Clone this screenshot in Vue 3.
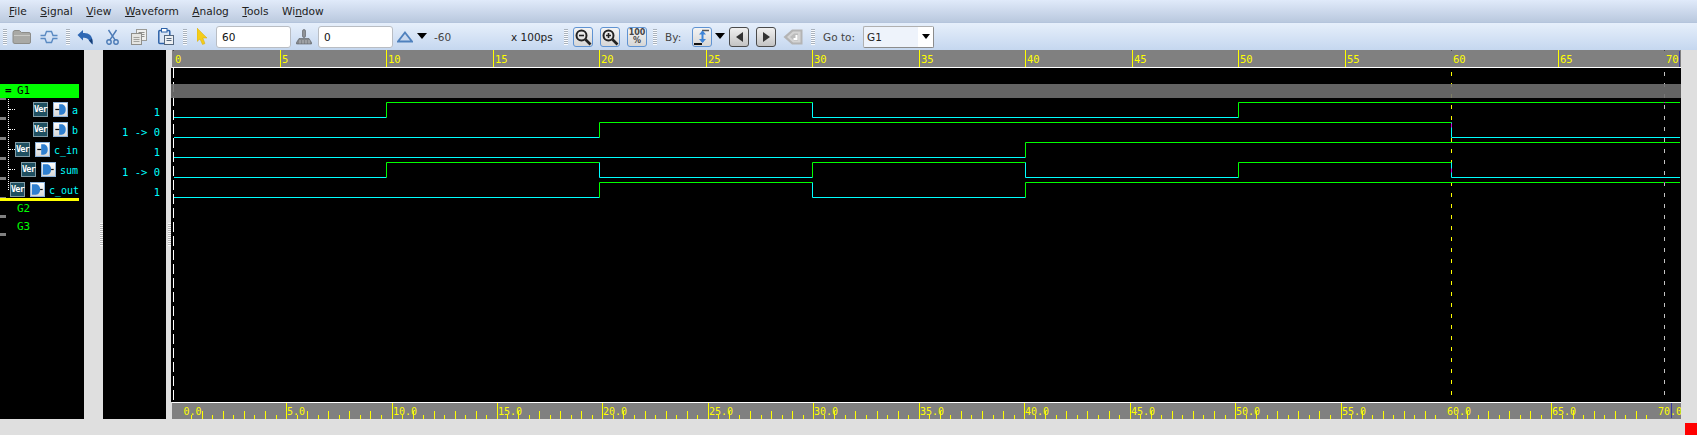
<template>
  <div class="app">
    <div class="menubar">
      <div class="menu-items">
        <span><u>F</u>ile</span>
        <span><u>S</u>ignal</span>
        <span><u>V</u>iew</span>
        <span><u>W</u>aveform</span>
        <span><u>A</u>nalog</span>
        <span><u>T</u>ools</span>
        <span>Wi<u>n</u>dow</span>
      </div>
    </div>

    <div class="toolbar">
      <i class="grip"></i>
      <svg class="ic folder" viewBox="0 0 20 16"><path d="M1 3.5Q1 1.5 3 1.5H7.5L9.5 3.5H17Q18.5 3.5 18.5 5V13Q18.5 14.5 17 14.5H3Q1 14.5 1 13Z" fill="#a9a9a5" stroke="#8d8d89" /><path d="M2 6.5H18" stroke="#c9c9c5" /></svg>
      <svg class="ic pulse" viewBox="0 0 18 16" fill="none" stroke="#5a8ac2" stroke-width="1.4"><path d="M0.5 6.5H5L6.5 2.5H11.5L13 6.5H17.5" /><path d="M0.5 9.5H5L6.5 13.5H11.5L13 9.5H17.5" /></svg>
      <i class="grip g-a"></i>
      <svg class="ic undo" viewBox="0 0 16 16"><path d="M0.5 6L6 1V4C11.5 3.5 15.5 6.5 15.5 12V15.5L12 11.5C11 9.5 9 8.5 6 8.8V11.5Z" fill="#2f68b4" /><path d="M15.5 12V15.5L12 11.5C13 11 14 10.5 15 9.5Z" fill="#173f78" /></svg>
      <svg class="ic scissors" viewBox="0 0 13 16" fill="none" stroke="#4b7ab6" stroke-width="1.4"><path d="M2.5 1L9.2 11.2M10.5 1L3.8 11.2" /><circle cx="3" cy="13" r="2.2" /><circle cx="10" cy="13" r="2.2" /></svg>
      <svg class="ic copy" viewBox="0 0 16 16"><rect x="5.5" y="0.5" width="10" height="11" fill="#f0f0ee" stroke="#9b9b97" /><path d="M7.5 3.5H13.5M7.5 5.5H13.5M7.5 7.5H13.5" stroke="#8f8f8b" /><rect x="0.5" y="4.5" width="10" height="11" fill="#e5e5e2" stroke="#8f8f8b" /><path d="M2.5 8.5H8.5M2.5 10.5H8.5M2.5 12.5H8.5" stroke="#a2a29e" /></svg>
      <svg class="ic paste" viewBox="0 0 16 17"><rect x="0.8" y="2.5" width="11" height="13" rx="1" fill="#dbe6f5" stroke="#2d62a8" stroke-width="1.5" /><rect x="3.5" y="0.5" width="5.5" height="3.5" fill="#fff" stroke="#2d62a8" /><rect x="6.5" y="7.5" width="9" height="9" fill="#eef0f2" stroke="#55687f" /><path d="M8.5 10.5H13.5M8.5 12.5H13.5" stroke="#55687f" /></svg>
      <i class="grip g-b"></i>
      <svg class="ic pointer" viewBox="0 0 10 17"><path d="M0 0V13.5L3 11L5.5 16.5L8 15.5L5.8 10H10Z" fill="#f4cd1a" stroke="#d6a90c" stroke-width="0.5" /></svg>
      <div class="field f-a">60</div>
      <svg class="ic hand" viewBox="0 0 16 16"><rect x="6.5" y="0.5" width="3" height="8" rx="1.5" fill="#8f9296" stroke="#55585c" stroke-width="0.6" /><path d="M3 9.5H13L15.5 13.5V15H0.5V13.5Z" fill="#85888c" stroke="#5c5f63" stroke-width="0.6" /><path d="M4 11V14.5M7 11V14.5M10 11V14.5M13 11V14.5" stroke="#b6b8bb" /></svg>
      <div class="field f-b">0</div>
      <svg class="ic delta" viewBox="0 0 16 12" fill="#c9d8ee" stroke="#4f81bd" stroke-width="1.8"><path d="M8 1.5L15 10.5H1Z" /></svg>
      <svg class="ic drop d-a" viewBox="0 0 10 6"><path d="M0 0H10L5 6Z" fill="#000" /></svg>
      <span class="label delta-val">-60</span>
      <span class="label scale-val">x 100ps</span>
      <i class="grip g-c"></i>
      <div class="tbtn z-a">
        <svg viewBox="0 0 18 18" fill="none" stroke="#222" stroke-width="2"><circle cx="7.5" cy="7.5" r="5" /><path d="M11.5 11.5L16.5 16.5" stroke-width="2.6" /><path d="M5 7.5H10" stroke-width="1.6" /></svg>
      </div>
      <div class="tbtn z-b">
        <svg viewBox="0 0 18 18" fill="none" stroke="#222" stroke-width="2"><circle cx="7.5" cy="7.5" r="5" /><path d="M11.5 11.5L16.5 16.5" stroke-width="2.6" /><path d="M5 7.5H10M7.5 5V10" stroke-width="1.6" /></svg>
      </div>
      <div class="tbtn z-b pct">100<br />%</div>
      <i class="grip g-d"></i>
      <span class="label by">By:</span>
      <div class="tbtn by-btn">
        <svg viewBox="0 0 18 18" fill="none"><path d="M9 2.5H16" stroke="#555" stroke-width="1.5" /><path d="M1 16H9" stroke="#111" stroke-width="2" /><path d="M9.5 3.5V14" stroke="#3d84d8" stroke-width="2" /><path d="M6 6.5L9.5 2.5L13 6.5ZM6 11L9.5 15L13 11Z" fill="#3d84d8" /></svg>
      </div>
      <svg class="ic drop d-b" viewBox="0 0 10 6"><path d="M0 0H10L5 6Z" fill="#000" /></svg>
      <div class="tbtn nav n-a">
        <svg viewBox="0 0 18 18"><path d="M13 4V14L6 9Z" fill="#333" /></svg>
      </div>
      <div class="tbtn nav z-b">
        <svg viewBox="0 0 18 18"><path d="M6 4V14L13 9Z" fill="#333" /></svg>
      </div>
      <svg class="ic back" viewBox="0 0 20 20"><path d="M0.5 10L9 2.5H19.5V17.5H9Z" fill="#b4b4b4" /><path d="M4 10L10 4.5H17.5V15.5H10Z" fill="#d4d4d4" /><path d="M7 10L11 6.5H15V13.5H11Z" fill="#bcbcbc" /><path d="M10.5 12H13.5V8" fill="none" stroke="#fff" stroke-width="2" /></svg>
      <i class="grip g-e"></i>
      <span class="label goto">Go to:</span>
      <div class="combo">
        <span class="combo-text">G1</span>
        <span class="combo-arrow"><svg viewBox="0 0 10 6"><path d="M0 0H10L5 6Z" fill="#000" /></svg></span>
      </div>
    </div>

    <div class="main">
      <div class="names">
        <i v-for="y in nameMarks" :key="y" class="mark" :style="{ top: y + 'px' }"></i>
        <i class="tree-v"></i>
        <i v-for="y in treeRows" :key="'t' + y" class="tree-h" :style="{ top: y + 'px' }"></i>
        <div class="group-head"><b>=</b><span>G1</span></div>
        <div class="sig-rows">
          <div v-for="s in signals" :key="s.name" class="sig-row" :style="{ paddingLeft: s.indent + 'px' }">
            <span class="ver">Ver</span>
            <span class="port" :class="s.out ? 'port-out' : 'port-in'">
              <svg viewBox="0 0 15 15">
                <path v-if="s.out" d="M1 1.5H5.5C9 1.5 10.5 4.5 10.5 7.5S9 13.5 5.5 13.5H1Z" fill="#2f7fd0" />
                <path v-if="s.out" d="M10.5 7.5H13.5" stroke="#111" stroke-width="1.4" />
                <path v-if="!s.out" d="M6 1.5H8.5C12 1.5 13.5 4.5 13.5 7.5S12 13.5 8.5 13.5H6Z" fill="#2f7fd0" />
                <path v-if="!s.out" d="M1.5 7.5H6" stroke="#111" stroke-width="1.4" />
              </svg>
            </span>
            <span class="sig-name">{{ s.name }}</span>
          </div>
        </div>
        <div class="insert-line"></div>
        <div class="group first">G2</div>
        <div class="group">G3</div>
      </div>

      <div class="sash wide"><i></i></div>

      <div class="values">
        <div v-for="s in signals" :key="s.name" class="value">{{ s.value }}</div>
      </div>

      <div class="sash"><i></i></div>

      <div class="wave-col">
        <svg class="ruler-top" viewBox="172 50 1509 17">
          <rect x="172" y="50" width="1509" height="17" fill="#808080" />
          <template v-for="t in topTicks" :key="t">
            <path v-if="t !== 0 && t !== 60 && t !== 70" :d="`M${tx(t)} 50V67`" stroke="#ffff00" />
            <path v-else :d="`M${tx(t)} 50V51`" stroke="#444" />
            <text :x="tx(t) + 1.5" y="63" class="rtext">{{ t }}</text>
          </template>
          <path d="M1679.5 51V67" stroke="#3a3a9e" />
        </svg>
        <svg class="waves" viewBox="171 68 1510 334">
          <rect x="171" y="68" width="1510" height="334" fill="#000" />
          <path d="M173.5 68V402" stroke="#fff" stroke-dasharray="10 4" />
          <path d="M1451.5 72V402" stroke="#ffff00" stroke-dasharray="4 7" />
          <path d="M1664.5 72V402" stroke="#c4c4c4" stroke-dasharray="4 7" />
          <rect x="171" y="84" width="1510" height="14" fill="#6f6f6f" fill-opacity="0.9" />
          <g fill="none">
            <path v-for="(p, i) in wavePaths" :key="i" :d="p.d" :stroke="p.color" />
          </g>
          <path d="M1451.5 123.5V127.5M1451.5 168.5V172.5" stroke="#d000d0" />
          <path d="M1664.5 102V103M1664.5 182V183" stroke="#d000d0" />
        </svg>
        <svg class="ruler-bottom" viewBox="172 402 1509 17">
          <rect x="172" y="402" width="1509" height="1" fill="#fff" />
          <rect x="172" y="403" width="1509" height="16" fill="#808080" />
          <path v-for="k in minorTicks" :key="k.x" :d="`M${k.x} ${k.top}V419`" stroke="#ffff00" />
          <template v-for="m in bottomLabels" :key="m.t">
            <path v-if="m.tick" :d="`M${m.x} 403V419`" stroke="#ffff00" />
            <text :x="m.tx" y="415" class="rtext small">{{ m.t }}.0</text>
          </template>
          <path d="M1671.5 403V418" stroke="#3a3a9e" />
        </svg>
      </div>
    </div>

    <div class="status"><i class="led"></i></div>
  </div>
</template>

<script setup>
const signals = [
  { name: 'a', value: '1', indent: 33, out: false },
  { name: 'b', value: '1 -> 0', indent: 33, out: false },
  { name: 'c_in', value: '1', indent: 15, out: false },
  { name: 'sum', value: '1 -> 0', indent: 21, out: true },
  { name: 'c_out', value: '1', indent: 10, out: true }
]

const nameMarks = [47, 67, 87, 107, 127, 147, 165, 183]
const treeRows = [59, 79, 99, 119]

// time -> px on the top ruler and on the waves
const tx = (t) => Math.floor(173.5 + 21.3 * t) + 0.5

const topTicks = []
for (let t = 0; t <= 70; t += 5) topTicks.push(t)

// [time of each toggle], every signal starts low at row base
const traces = [
  [10, 30, 50],
  [20, 60],
  [40],
  [10, 20, 30, 40, 50, 60],
  [20, 30, 40]
]
const END_X = 1680
const LOW = '#00ffff'
const HIGH = '#00ff00'

const wavePaths = []
traces.forEach((toggles, row) => {
  const hi = 102.5 + row * 20
  const lo = hi + 15
  let x = 174
  let high = false
  toggles.forEach((t) => {
    const nx = tx(t)
    wavePaths.push({ d: `M${x} ${high ? hi : lo}H${nx}`, color: high ? HIGH : LOW })
    high = !high
    wavePaths.push({ d: `M${nx} ${hi}V${lo}`, color: high ? HIGH : LOW })
    x = nx
  })
  wavePaths.push({ d: `M${x} ${high ? hi : lo}H${END_X}`, color: high ? HIGH : LOW })
})

const B0 = 180.6
const BSTEP = 10.545
const minorTicks = []
for (let i = 1; i < 140; i++) {
  if (i % 10 === 0) continue
  minorTicks.push({ x: Math.round(B0 + BSTEP * i) + 0.5, top: i % 2 ? 415 : 411 })
}

const bottomLabels = []
for (let t = 0; t <= 70; t += 5) {
  const x = Math.round(B0 + BSTEP * t * 2) + 0.5
  bottomLabels.push({ t, x, tick: t !== 0 && t !== 60 && t !== 70, tx: x + (t === 0 ? 2 : 0.5) })
}
</script>

<style>
html,
body {
  margin: 0;
  background: #dfdfdf;
}
</style>

<style scoped>
.app {
  width: 1697px;
  height: 435px;
  overflow: hidden;
  display: flex;
  flex-direction: column;
  font-family: "DejaVu Sans", sans-serif;
  background: #dfdfdf;
}

.menubar {
  height: 23px;
  box-sizing: border-box;
  background: linear-gradient(#e0eafa, #b9c8de);
  border-bottom: 1px solid #b4c4dc;
}

.menu-items {
  width: 330px;
  height: 22px;
  box-sizing: border-box;
  padding-left: 9px;
  display: flex;
  align-items: center;
  gap: 13.5px;
  font-size: 10.6px;
  color: #222;
  background: rgba(255, 255, 255, 0.06);
}

.toolbar {
  height: 27px;
  box-sizing: border-box;
  padding-left: 3px;
  display: flex;
  align-items: center;
  background: linear-gradient(#e6effb, #c5d7ef);
  font-size: 10.5px;
  color: #444;
}

.ic {
  flex: none;
  display: block;
}

.grip {
  flex: none;
  width: 4px;
  height: 16px;
  background: repeating-linear-gradient(#a9b2bd 0 1px, #fafcff 1px 2px);
}

.g-a { margin-left: 8px; }
.g-b { margin-left: 9px; }
.g-c { margin-left: 9px; }
.g-d { margin-left: 6px; }
.g-e { margin-left: 8px; }

.folder { width: 20px; height: 16px; margin-left: 5px; }
.pulse { width: 18px; height: 16px; margin-left: 8px; }
.undo { width: 16px; height: 16px; margin-left: 7px; }
.scissors { width: 13px; height: 16px; margin-left: 13px; }
.copy { width: 16px; height: 16px; margin-left: 12px; }
.paste { width: 16px; height: 17px; margin-left: 11px; }
.pointer { width: 10px; height: 17px; margin-left: 10px; }
.hand { width: 16px; height: 16px; margin-left: 5px; }
.delta { width: 16px; height: 12px; margin-left: 4px; }
.drop { width: 10px; height: 6px; }
.d-a { margin-left: 4px; margin-bottom: 2px; }
.d-b { margin-left: 3px; margin-bottom: 2px; }
.back { width: 20px; height: 20px; margin-left: 7px; }

.field {
  flex: none;
  width: 75px;
  height: 22px;
  box-sizing: border-box;
  padding-left: 5px;
  line-height: 20px;
  color: #111;
  background: #fff;
  border: 1px solid #b9bdc3;
  border-radius: 3px;
}

.f-a { margin-left: 9px; }
.f-b { margin-left: 6px; }

.label { flex: none; }
.delta-val { margin-left: 7px; width: 18px; }
.scale-val { margin-left: 59px; width: 44px; color: #222; white-space: nowrap; }
.by { margin-left: 8px; width: 17px; }
.goto { margin-left: 8px; width: 33px; white-space: nowrap; }

.tbtn {
  flex: none;
  width: 20px;
  height: 20px;
  box-sizing: border-box;
  border: 1px solid #5f93d2;
  border-radius: 3px;
  background: linear-gradient(#f4f4f4, #d6d6d6);
}

.tbtn svg {
  display: block;
  width: 18px;
  height: 18px;
}

.z-a { margin-left: 5px; }
.z-b { margin-left: 7px; }

.pct {
  font-size: 8px;
  font-weight: 700;
  line-height: 8px;
  padding-top: 1px;
  text-align: center;
  color: #444;
}

.by-btn { margin-left: 10px; }

.nav {
  border-color: #4a4a4a;
  background: linear-gradient(#f0f0f0, #c4c4c4);
}

.n-a { margin-left: 4px; }

.combo {
  flex: none;
  width: 71px;
  height: 22px;
  margin-left: 7px;
  box-sizing: border-box;
  display: flex;
  border: 1px solid #b0b0b0;
  border-right-color: #8c8c8c;
  border-bottom-color: #8c8c8c;
  border-radius: 2px;
  background: #eef3fb;
}

.combo-text {
  flex: 1;
  padding-left: 3px;
  line-height: 20px;
  color: #222;
}

.combo-arrow {
  width: 15px;
  background: #fff;
  display: flex;
  align-items: center;
  justify-content: center;
}

.combo-arrow svg {
  width: 8px;
  height: 5px;
}

.main {
  height: 369px;
  display: flex;
}

.names {
  position: relative;
  flex: none;
  width: 84px;
  box-sizing: border-box;
  padding-top: 34px;
  background: #000;
  font-family: "DejaVu Sans Mono", monospace;
}

.mark {
  position: absolute;
  left: 0;
  width: 6px;
  height: 3px;
  background: #808080;
}

.tree-v {
  position: absolute;
  left: 8px;
  top: 47px;
  height: 93px;
  border-left: 1px dotted #fff;
}

.tree-h {
  position: absolute;
  left: 9px;
  width: 6px;
  border-top: 1px dotted #fff;
}

.group-head {
  position: relative;
  width: 79px;
  height: 14px;
  display: flex;
  align-items: center;
  background: #00ff00;
  color: #000;
  font-size: 11px;
  line-height: 14px;
}

.group-head b {
  width: 11px;
  margin-left: 5px;
}

.group-head span {
  margin-left: 1px;
}

.sig-rows {
  position: relative;
}

.sig-row {
  height: 20px;
  box-sizing: border-box;
  padding-top: 4px;
  display: flex;
  gap: 5px;
}

.ver {
  flex: none;
  width: 15px;
  height: 15px;
  box-sizing: border-box;
  border: 1px solid #7f9aa5;
  background: #1f4f60;
  color: #fff;
  font-size: 8.5px;
  font-weight: 700;
  line-height: 13px;
  text-align: center;
  letter-spacing: -0.8px;
}

.port {
  flex: none;
  width: 15px;
  height: 15px;
  box-sizing: border-box;
  border: 1px solid #8db3dc;
  background: linear-gradient(#ffffff, #d8d8d8);
}

.port svg {
  display: block;
  width: 13px;
  height: 13px;
}

.sig-name {
  margin-left: -1px;
  color: #00ffff;
  font-size: 10px;
  line-height: 18px;
}

.insert-line {
  position: relative;
  width: 79px;
  height: 3px;
  background: #ffff00;
}

.group {
  height: 18px;
  padding-left: 17px;
  color: #00ff00;
  font-size: 11px;
  line-height: 18px;
}

.group.first {
  margin-top: -1px;
}

.sash {
  flex: none;
  width: 5px;
  display: flex;
  justify-content: flex-end;
  align-items: center;
  background: #dfdfdf;
}

.sash.wide {
  width: 19px;
}

.sash i {
  width: 3px;
  height: 23px;
  background: repeating-linear-gradient(#f8f8f8 0 1px, #b5b5b5 1px 2px);
}

.values {
  flex: none;
  width: 63px;
  box-sizing: border-box;
  padding: 48px 6px 0 0;
  background: #000;
  color: #00ffff;
  font-family: "DejaVu Sans Mono", monospace;
  font-size: 10.5px;
  text-align: right;
}

.value {
  height: 20px;
  line-height: 28px;
  white-space: nowrap;
}

.wave-col {
  flex: none;
  width: 1510px;
  height: 369px;
  display: flex;
  flex-direction: column;
}

.wave-col svg {
  display: block;
  flex: none;
}

.ruler-top {
  width: 1509px;
  height: 17px;
  margin-left: 1px;
  border-bottom: 1px solid #fff;
}

.waves {
  width: 1510px;
  height: 334px;
}

.ruler-bottom {
  width: 1509px;
  height: 17px;
  margin-left: 1px;
}

.rtext {
  fill: #ffff00;
  font-family: "DejaVu Sans Mono", monospace;
  font-size: 10.5px;
}

.rtext.small {
  font-size: 10px;
}

.status {
  position: relative;
  flex: 1;
  background: #dfdfdf;
}

.led {
  position: absolute;
  right: 0;
  bottom: 0;
  width: 12px;
  height: 12px;
  background: #ff0000;
}
</style>
